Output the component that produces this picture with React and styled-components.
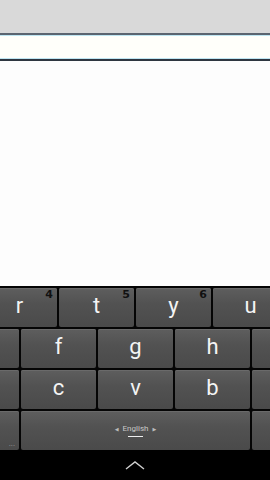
import styled, { createGlobalStyle } from 'styled-components'

const Global = createGlobalStyle`
  html, body { margin: 0; padding: 0; }
  body {
    width: 270px;
    height: 480px;
    overflow: hidden;
    font-family: Roboto, "Noto Sans", "DejaVu Sans", sans-serif;
    background: #fdfdfd;
  }
`

const Screen = styled.div`
  width: 270px;
  height: 480px;
  display: flex;
  flex-direction: column;
  overflow: hidden;
`

const TopBar = styled.div`
  height: 33px;
  background: #d9d9d9;
`

const Field = styled.div`
  height: 24px;
  background: #fffffa;
  border-top: 2px solid #5b6570;
  border-bottom: 2px solid #2e3640;
  box-shadow: inset 0 1px 0 #bfe6f2, inset 0 -1px 0 #bfe6f2;
`

const Page = styled.div`
  flex: 1;
  background: #fdfdfd;
`

const Keyboard = styled.div`
  background: #050505;
  padding-top: 2px;
  display: flex;
  flex-direction: column;
  gap: 2px;
`

const Row = styled.div`
  height: 39px;
  display: flex;
  gap: 2px;
  margin-left: ${p => p.$offset}px;
`

const Key = styled.div`
  position: relative;
  flex: none;
  width: ${p => p.$w || 75}px;
  height: 39px;
  border-radius: 2px;
  background: linear-gradient(180deg, #5e5e5e 0%, #525252 40%, #4a4a4a 100%);
  box-shadow: inset 0 1px 0 #6a6a6a;
  display: flex;
  align-items: center;
  justify-content: center;
  color: #f4f4f4;
  font-size: 22px;
  line-height: 1;
  padding-bottom: 3px;
  box-sizing: border-box;
`

const Hint = styled.span`
  position: absolute;
  top: 1px;
  right: 4px;
  font-size: 11px;
  font-weight: bold;
  color: #111;
  font-family: "DejaVu Sans", sans-serif;
`

const Dots = styled.span`
  position: absolute;
  right: 4px;
  bottom: 2px;
  font-size: 8px;
  color: #9a9a9a;
  line-height: 1;
`

const Lang = styled.div`
  display: flex;
  flex-direction: column;
  align-items: center;
  gap: 3px;
  margin-top: 4px;
`

const LangLabel = styled.div`
  display: flex;
  align-items: center;
  gap: 4px;
  font-size: 8px;
  color: #c8c8c8;
`

const Arrow = styled.span`
  font-size: 5px;
  color: #bbb;
`

const Underline = styled.div`
  width: 15px;
  height: 1px;
  background: #eee;
`

const NavBar = styled.div`
  height: 30px;
  background: #000;
  display: flex;
  align-items: center;
  justify-content: center;
`

const rows = [
  { offset: -18, keys: [['r', '4'], ['t', '5'], ['y', '6'], ['u']] },
  { offset: -56, keys: [[''], ['f'], ['g'], ['h'], ['']] },
  { offset: -56, keys: [[''], ['c'], ['v'], ['b'], ['']] },
]

export default function App() {
  return (
    <Screen>
      <Global />
      <TopBar />
      <Field />
      <Page />
      <Keyboard>
        {rows.map((row, i) => (
          <Row key={i} $offset={row.offset}>
            {row.keys.map(([ch, hint], j) => (
              <Key key={j}>
                {ch}
                {hint && <Hint>{hint}</Hint>}
              </Key>
            ))}
          </Row>
        ))}
        <Row $offset={-56}>
          <Key>
            <Dots>...</Dots>
          </Key>
          <Key $w={229}>
            <Lang>
              <LangLabel>
                <Arrow>◀</Arrow>English<Arrow>▶</Arrow>
              </LangLabel>
              <Underline />
            </Lang>
          </Key>
          <Key />
        </Row>
      </Keyboard>
      <NavBar>
        <svg width="20" height="10" viewBox="0 0 20 10">
          <path d="M1 9 L10 2 L19 9" fill="none" stroke="#cfcfcf" strokeWidth="1.4" />
        </svg>
      </NavBar>
    </Screen>
  )
}
